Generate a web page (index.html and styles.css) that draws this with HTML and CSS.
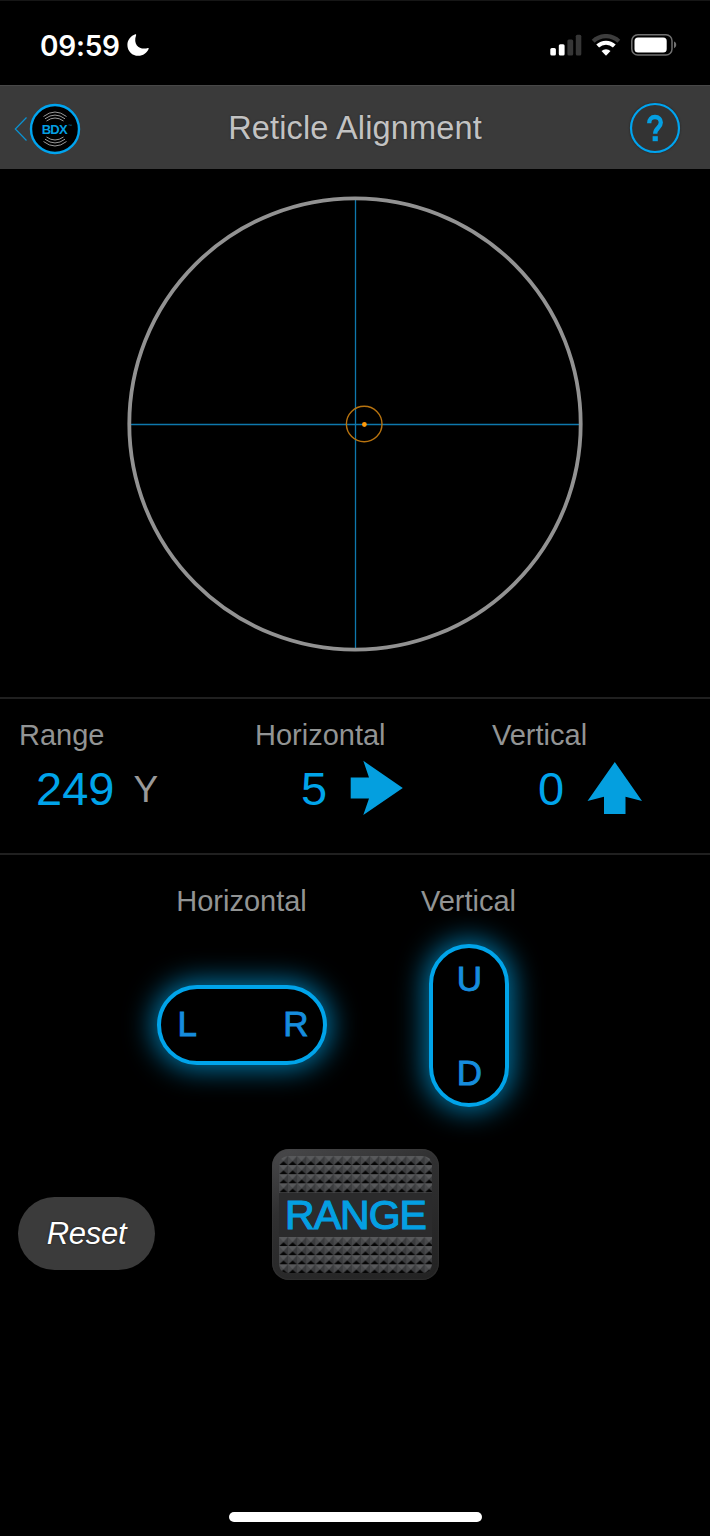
FILE: index.html
```html
<!DOCTYPE html>
<html lang="en">
<head>
    <meta charset="UTF-8">
    <meta name="viewport" content="width=device-width, initial-scale=1.0">
    <title>Reticle Alignment</title>
    <link rel="stylesheet" href="styles.css">
</head>
<body>
    <!-- status bar -->
    <div class="status">
        <span class="time">09:59</span>
        <svg class="moon" width="22" height="22" viewBox="0 0 22 22"><path d="M8.300 0.300C4 1.800 0.400 5.800 0.400 11a10.800 10.800 0 0 0 10.800 10.800c4.900 0 8.900-3 10.500-7.100c.2-.6-.2-.9-.8-.7C13.500 16.300 5.500 11.500 9.100 1.200c.2-.6-.2-1.100-.8-.9z" fill="#fff"/></svg>
        <svg class="signal" width="32" height="22" viewBox="0 0 32 22">
            <rect x="0.300" y="14" width="5.600" height="7.500" rx="1.500" fill="#fff"/>
            <rect x="8.800" y="10.200" width="5.800" height="11.300" rx="1.500" fill="#fff"/>
            <rect x="17.400" y="5.500" width="5.800" height="16" rx="1.500" fill="#363636"/>
            <rect x="25.800" y="0.700" width="5.500" height="20.800" rx="1.500" fill="#363636"/>
        </svg>
        <svg class="wifi" width="30" height="22" viewBox="0 0 30 22">
            <path d="M2.200 7.200a18.500 18.500 0 0 1 25.600 0" fill="none" stroke="#3d3d3d" stroke-width="4.200"/>
            <path d="M6.700 12.100a12 12 0 0 1 16.600 0" fill="none" stroke="#fff" stroke-width="4.100"/>
            <path d="M15 21.700l-4.500-4.600a6.600 6.600 0 0 1 9 0z" fill="#fff"/>
        </svg>
        <svg class="battery" width="46" height="22" viewBox="0 0 46 22">
            <rect x="0.800" y="0.800" width="40.200" height="20.200" rx="6" fill="none" stroke="#707070" stroke-width="1.500"/>
            <rect x="3.500" y="3.400" width="32.200" height="15" rx="3.500" fill="#fff"/>
            <path d="M43 7.600c3 1 3 5.600 0 6.600z" fill="#707070"/>
        </svg>
    </div>

    <header class="navbar">
        <a class="back">
            <svg class="chevron" width="14" height="26" viewBox="0 0 14 26"><path d="M12.500 1.500L1.300 13l11.200 11.500" fill="none" stroke="#0a93d3" stroke-width="1.200"/></svg>
            <svg width="52" height="52" viewBox="0 0 52 52">
                <circle cx="26" cy="26" r="24" fill="#000" stroke="#00a4ef" stroke-width="2.400"/>
                <g fill="none" stroke="#9a9a9a" stroke-width="1">
                    <path d="M14.500 13.500q11.500-9 23 0M16 15.800q10-7.500 20 0M17.500 18q8.500-6 17 0"/>
                    <path d="M14.500 38.500q11.500 9 23 0M16 36.200q10 7.500 20 0M17.500 34q8.500 6 17 0"/>
                </g>
                <text class="logo-text" x="12.700" y="31" textLength="26">BDX</text>
                <text class="logo-tm" x="39" y="24">™</text>
            </svg>
        </a>
        <h1>Reticle Alignment</h1>
        <svg class="help" width="52" height="52" viewBox="0 0 52 52">
            <circle cx="26" cy="26" r="24" fill="#333" stroke="#00a4ef" stroke-width="2.200"/>
            <path d="M20.200 21.300c0-4 2.200-6.300 5.800-6.300c3.600 0 5.800 2.100 5.800 5.500c0 5.600-5.600 5.200-5.600 11.300" fill="none" stroke="#049fe2" stroke-width="4.300"/>
            <rect x="23.600" y="34.200" width="5.200" height="5" fill="#049fe2"/>
        </svg>
    </header>

    <!-- reticle -->
    <div class="scope">
        <svg width="456" height="456" viewBox="0 0 456 456">
            <path d="M228.500 3v450M3 228.500h450" stroke="#0e78ad" stroke-width="1.300"/>
            <circle cx="228" cy="228" r="225.700" fill="none" stroke="#929292" stroke-width="3.800"/>
            <circle cx="237.200" cy="228" r="17.800" fill="none" stroke="#b8730f" stroke-width="1.400"/>
            <circle cx="237.400" cy="228.500" r="2.400" fill="#ff9a0a"/>
        </svg>
    </div>

    <!-- current values -->
    <div class="stats">
        <div class="stat">
            <div class="label">Range</div>
            <div class="value"><span class="num">249</span><span class="unit">Y</span></div>
        </div>
        <div class="stat">
            <div class="label">Horizontal</div>
            <div class="value single">
                <span class="num">5</span>
                <svg class="arrow" width="54" height="56" viewBox="0 0 54 56"><path d="M.7 17.500h18.300L13.300.8L52.800 28L13.300 55l5.700-16.600H.7z" fill="#049fdf"/></svg>
            </div>
        </div>
        <div class="stat">
            <div class="label">Vertical</div>
            <div class="value single">
                <span class="num">0</span>
                <svg class="arrow" width="56" height="56" viewBox="0 0 56 56"><path d="M27.800 2L55 41l-16.500-4.300v17.200H17V36.700L.5 41z" fill="#049fdf"/></svg>
            </div>
        </div>
    </div>

    <!-- adjust buttons -->
    <div class="controls">
        <div class="control">
            <div class="label">Horizontal</div>
            <div class="pill wide"><span>L</span><span>R</span></div>
        </div>
        <div class="control">
            <div class="label">Vertical</div>
            <div class="pill tall"><span>U</span><span>D</span></div>
        </div>
    </div>

    <div class="actions">
        <button class="reset">Reset</button>
        <button class="range">
            <svg class="grip" width="153" height="37" viewBox="0 0 153 37">
                <defs>
                    <pattern id="knurl" width="9.100" height="9.100" patternUnits="userSpaceOnUse">
                        <rect width="9.100" height="9.100" fill="#48494b"/>
                        <path d="M0 0h9.100L4.550 5z" fill="#58595b"/>
                        <path d="M9.100 0v9.100L4.550 5z" fill="#3a3b3d"/>
                        <path d="M.2 9.100h8.700L4.550 5.300z" fill="#050505"/>
                    </pattern>
                </defs>
                <path d="M0 37V10Q0 0 10 0h133q10 0 10 10v27z" fill="url(#knurl)"/>
            </svg>
            <span class="range-text">RANGE</span>
            <svg class="grip" width="153" height="36" viewBox="0 0 153 36">
                <path d="M0 0h153v26q0 10-10 10H10Q0 36 0 26z" fill="url(#knurl)"/>
            </svg>
        </button>
    </div>

    <div class="home-bar"></div>
</body>
</html>
```
FILE: styles.css
```css
* {
    box-sizing: border-box;
}
body {
    margin: 0;
    height: 1536px;
    display: flex;
    flex-direction: column;
    background: #000;
    font-family: "Liberation Sans", Arial, sans-serif;
    color: #999;
    overflow: hidden;
}
svg {
    display: block;
    flex: none;
}

/* status bar */
.status {
    height: 85px;
    padding: 4px 33px 0 40px;
    display: flex;
    align-items: center;
    border-top: 1px solid #161616;
}
.time {
    padding-top: 1px;
    font-family: Inter, sans-serif;
    font-size: 28px;
    font-weight: 600;
    line-height: 30px;
    letter-spacing: -0.2px;
    color: #fff;
    width: 87px;
    white-space: nowrap;
}
.signal {
    margin-left: auto;
}
.wifi {
    margin-left: 9px;
}
.battery {
    margin-left: 10px;
}

/* title bar */
.navbar {
    height: 84px;
    padding: 0 29px 0 14px;
    display: grid;
    grid-template-columns: 80px 1fr 65px;
    align-items: center;
    background: #3a3a3a;
    border-top: 1px solid #484848;
}
.navbar h1 {
    margin: 0;
    padding-top: 2px;
    font-size: 32.5px;
    font-weight: normal;
    letter-spacing: 0.15px;
    text-align: center;
    color: #c2c2c2;
    text-shadow: 0 0 2px #222;
}
.back {
    display: flex;
    align-items: center;
    gap: 1px;
    padding-top: 3px;
}
.logo-text {
    font-size: 13px;
    font-weight: bold;
    fill: #049fe2;
}
.logo-tm {
    font-size: 4px;
    fill: #0a7fb5;
}
.help {
    justify-self: end;
    filter: drop-shadow(0 0 1px #222);
}

/* reticle */
.scope {
    height: 528px;
    padding-top: 27px;
    display: flex;
    justify-content: center;
}

/* values */
.stats {
    height: 158px;
    padding: 19px 0 0 19px;
    display: grid;
    grid-template-columns: 236px 237px 1fr;
    border-top: 2px solid #202020;
    border-bottom: 2px solid #202020;
}
.label {
    font-size: 29px;
    line-height: 34px;
    color: #929494;
}
.value {
    height: 56px;
    margin-top: 8px;
    padding-left: 17px;
    display: flex;
    align-items: center;
}
.single {
    padding-left: 46px;
}
.num {
    font-size: 47px;
    line-height: 54px;
    padding-top: 2px;
    color: #00a4ea;
}
.unit {
    font-size: 37px;
    line-height: 54px;
    margin-left: 19px;
    padding-top: 3px;
}
.arrow {
    margin-left: 23px;
}

/* adjust buttons */
.controls {
    height: 294px;
    padding: 29px 0 0 156px;
    display: grid;
    grid-template-columns: 227px 171px;
}
.control {
    display: flex;
    flex-direction: column;
    align-items: center;
}
.control:first-child {
    width: 171px;
}
.pill {
    display: flex;
    justify-content: space-between;
    align-items: center;
    border: 4px solid #00a4ea;
    border-radius: 40px;
    background: #000;
    box-shadow: 0 0 28px 4px #0077a8;
    font-size: 35px;
    line-height: 35px;
    color: #168ddd;
    -webkit-text-stroke: 0.9px #168ddd;
}
.wide {
    width: 170px;
    height: 80px;
    margin-top: 67px;
    padding: 0 14px 4px 17px;
}
.tall {
    width: 80px;
    height: 163px;
    margin-top: 26px;
    padding: 13px 0 13px 2px;
    flex-direction: column;
}

/* bottom buttons */
.actions {
    height: 132px;
    padding-left: 18px;
    display: flex;
    align-items: flex-start;
}
button {
    border: 0;
    font-family: inherit;
}
.reset {
    width: 137px;
    height: 73px;
    margin-top: 48px;
    border-radius: 37px;
    background: #3b3b3b;
    color: #fff;
    font-size: 31px;
    font-style: italic;
    letter-spacing: -0.3px;
    text-shadow: 0 0 2px #111;
}
.range {
    width: 167px;
    height: 131px;
    margin-left: 117px;
    padding: 7px;
    display: flex;
    flex-direction: column;
    justify-content: space-between;
    border-radius: 17px;
    background: linear-gradient(160deg, #49494b 0%, #303031 35%, #222 100%);
    box-shadow: inset 0 0 2px #404040;
}
.range-text {
    height: 45px;
    width: 153px;
    background: #2b2b2c;
    font-size: 41px;
    line-height: 44px;
    letter-spacing: -1px;
    text-align: center;
    color: #049fe2;
    -webkit-text-stroke: 1.2px #049fe2;
}

.home-bar {
    width: 253px;
    height: 10px;
    margin: auto auto 14px;
    border-radius: 5px;
    background: #fff;
}
```
